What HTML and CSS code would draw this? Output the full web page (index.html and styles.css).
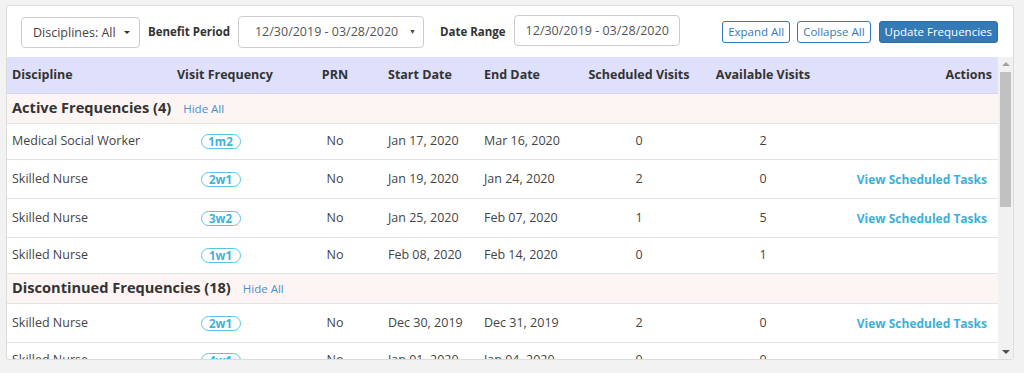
FILE: index.html
```html
<!DOCTYPE html>
<html>
<head>
<meta charset="utf-8">
<link rel="stylesheet" href="styles.css">
</head>
<body>
<div class="card">
  <div class="toolbar">
    <button class="dd-btn">Disciplines: All <span class="caret"></span></button>
    <label class="lbl">Benefit Period</label>
    <div class="select">12/30/2019 - 03/28/2020<span class="sel-arrow">▼</span></div>
    <label class="lbl lbl-range">Date Range</label>
    <div class="date-input">12/30/2019 - 03/28/2020</div>
    <div class="spacer"></div>
    <button class="btn-outline">Expand All</button>
    <button class="btn-outline">Collapse All</button>
    <button class="btn-primary">Update Frequencies</button>
  </div>
  <div class="grid-area">
    <div class="table-wrap">
      <table class="freq">
        <colgroup>
          <col class="c1"><col class="c2"><col class="c3"><col class="c4"><col class="c5"><col class="c6"><col class="c7"><col class="c8">
        </colgroup>
        <thead>
          <tr>
            <th>Discipline</th>
            <th>Visit Frequency</th>
            <th class="t-prn">PRN</th>
            <th>Start Date</th>
            <th>End Date</th>
            <th class="t-center">Scheduled Visits</th>
            <th class="t-center">Available Visits</th>
            <th class="t-right">Actions</th>
          </tr>
        </thead>
        <tbody>
          <tr class="group"><td colspan="8"><span class="g-title">Active Frequencies (4)</span><a class="hide-all">Hide All</a></td></tr>
          <tr>
            <td>Medical Social Worker</td><td class="t-badge"><span class="badge">1m2</span></td><td class="t-prn">No</td><td>Jan 17, 2020</td><td>Mar 16, 2020</td><td class="t-center">0</td><td class="t-center">2</td><td class="t-right"></td>
          </tr>
          <tr>
            <td>Skilled Nurse</td><td class="t-badge"><span class="badge">2w1</span></td><td class="t-prn">No</td><td>Jan 19, 2020</td><td>Jan 24, 2020</td><td class="t-center">2</td><td class="t-center">0</td><td class="t-right"><a class="view-link">View Scheduled Tasks</a></td>
          </tr>
          <tr>
            <td>Skilled Nurse</td><td class="t-badge"><span class="badge">3w2</span></td><td class="t-prn">No</td><td>Jan 25, 2020</td><td>Feb 07, 2020</td><td class="t-center">1</td><td class="t-center">5</td><td class="t-right"><a class="view-link">View Scheduled Tasks</a></td>
          </tr>
          <tr>
            <td>Skilled Nurse</td><td class="t-badge"><span class="badge">1w1</span></td><td class="t-prn">No</td><td>Feb 08, 2020</td><td>Feb 14, 2020</td><td class="t-center">0</td><td class="t-center">1</td><td class="t-right"></td>
          </tr>
          <tr class="group"><td colspan="8"><span class="g-title">Discontinued Frequencies (18)</span><a class="hide-all">Hide All</a></td></tr>
          <tr>
            <td>Skilled Nurse</td><td class="t-badge"><span class="badge">2w1</span></td><td class="t-prn">No</td><td>Dec 30, 2019</td><td>Dec 31, 2019</td><td class="t-center">2</td><td class="t-center">0</td><td class="t-right"><a class="view-link">View Scheduled Tasks</a></td>
          </tr>
          <tr>
            <td>Skilled Nurse</td><td class="t-badge"><span class="badge">4w1</span></td><td class="t-prn">No</td><td>Jan 01, 2020</td><td>Jan 04, 2020</td><td class="t-center">0</td><td class="t-center">0</td><td class="t-right"></td>
          </tr>
        </tbody>
      </table>
    </div>
    <div class="scrollbar">
      <div class="sb-up"></div>
      <div class="sb-track"><div class="sb-thumb"></div></div>
      <div class="sb-down"></div>
    </div>
  </div>
</div>
</body>
</html>
```
FILE: styles.css
```css
* { box-sizing: border-box; }
html, body { margin: 0; padding: 0; }
body {
  background: #f2f2f2;
  font-family: "Open Sans", "Liberation Sans", sans-serif;
  color: #444;
  padding: 5px 10px 0 6px;
  height: 373px;
  overflow: hidden;
}
.card {
  width: 1008px;
  height: 355px;
  background: #fff;
  border: 1px solid #dcdcdc;
  border-radius: 3px;
  display: flex;
  flex-direction: column;
  overflow: hidden;
}
.toolbar {
  height: 51px;
  flex: none;
  display: flex;
  align-items: center;
  padding: 0 15px 0 14px;
}
button { font-family: inherit; cursor: pointer; }
.dd-btn {
  width: 119px;
  height: 31px;
  margin-top: 1px;
  background: #fff;
  border: 1px solid #ccc;
  border-radius: 4px;
  font-size: 12.5px;
  color: #444;
  padding: 0 0 0 11px;
  text-align: left;
  display: flex;
  align-items: center;
}
.caret {
  display: inline-block;
  width: 0; height: 0;
  margin-left: 8px;
  border-left: 3px solid transparent;
  border-right: 3px solid transparent;
  border-top: 3px solid #333;
}
.lbl {
  font-weight: 700;
  font-size: 11.5px;
  color: #333;
  margin-left: 8px;
}
.lbl-range { margin-left: 16px; }
.select {
  width: 186px;
  height: 32px;
  margin-left: 8px;
  border: 1px solid #ccc;
  border-radius: 4px;
  font-size: 12.5px;
  color: #555;
  display: flex;
  align-items: center;
  padding-left: 16px;
}
.sel-arrow {
  font-size: 7px;
  margin-left: auto;
  margin-right: 7px;
  color: #444;
}
.date-input {
  width: 166px;
  height: 31px;
  margin-left: 8px;
  margin-bottom: 3px;
  border: 1px solid #ccc;
  border-radius: 4px;
  font-size: 12.5px;
  color: #555;
  display: flex;
  align-items: center;
  padding-left: 11px;
}
.spacer { flex: 1; }
.btn-outline, .btn-primary {
  height: 22px;
  font-size: 11.5px;
  border-radius: 3px;
  padding: 0 5px;
  margin-left: 7px;
  line-height: 20px;
}
.btn-outline {
  background: #fff;
  border: 1px solid #337ab7;
  color: #337ab7;
}
.btn-primary {
  background: #337ab7;
  border: 1px solid #2e6da4;
  color: #fff;
  margin-left: 8px;
}
.grid-area {
  flex: 1;
  display: flex;
  min-height: 0;
}
.table-wrap {
  flex: 1;
  overflow: hidden;
}
.freq {
  width: 991px;
  border-collapse: collapse;
  table-layout: fixed;
  font-size: 12.5px;
  color: #444;
}
.c1 { width: 165px; }
.c2 { width: 97px; }
.c3 { width: 114px; }
.c4 { width: 96px; }
.c5 { width: 105px; }
.c6 { width: 110px; }
.c7 { width: 138px; }
.c8 { width: 166px; }
.freq th {
  background: #dfe0fb;
  height: 36px;
  font-weight: 700;
  font-size: 12.5px;
  color: #333;
  text-align: left;
  padding: 0 0 0 5px;
  border-bottom: 1px solid #d4d6ee;
  white-space: nowrap;
}
.freq td {
  height: 36px;
  line-height: 18px;
  padding: 0 0 0 5px;
  border-bottom: 1px solid #e3e3e3;
  white-space: nowrap;
}
.freq .t-center { text-align: center; padding: 0; }
.freq .t-prn { text-align: center; padding: 0 0 0 18px; }
.freq .t-badge { text-align: center; padding: 0; }
.freq .t-right { text-align: right; padding: 0 6px 0 0; }
.freq tr.group td {
  background: #fdf5f3;
  height: 30px;
  padding-left: 5px;
}
.g-title {
  font-weight: 700;
  font-size: 14.6px;
  color: #333;
}
.hide-all {
  color: #4a8fd0;
  font-size: 11.5px;
  margin-left: 12px;
}
.badge {
  display: inline-block;
  border: 1.5px solid #5bc4e4;
  border-radius: 9px;
  color: #3bb2d9;
  font-weight: 700;
  font-size: 11.5px;
  line-height: 13px;
  width: 40px;
  text-align: center;
  vertical-align: middle;
}
.view-link {
  display: inline-block;
  color: #3bb0d8;
  font-weight: 700;
  font-size: 12px;
  line-height: 18px;
  padding: 11px 5px 9px 0;
  vertical-align: middle;
}
.scrollbar {
  width: 15px;
  flex: none;
  background: #f1f1f1;
  display: flex;
  flex-direction: column;
  align-items: center;
}
.sb-up, .sb-down {
  width: 0; height: 0;
  border-left: 4px solid transparent;
  border-right: 4px solid transparent;
}
.sb-up { border-bottom: 4px solid #a3a3a3; margin-top: 5px; }
.sb-down { border-top: 4px solid #505050; margin-bottom: 5px; }
.sb-track { flex: 1; width: 100%; padding: 6px 2px 0; }
.sb-thumb { height: 135px; background: #c1c1c1; }
```
